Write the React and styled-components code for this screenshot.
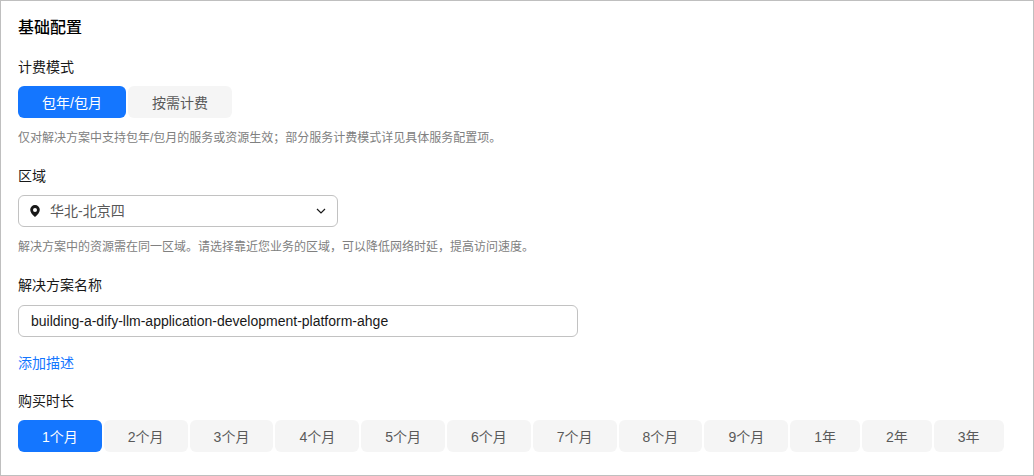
import React, { useState } from 'react';
import styled, { createGlobalStyle } from 'styled-components';

const GlobalStyle = createGlobalStyle`
  * {
    box-sizing: border-box;
  }
  html,
  body,
  #root {
    height: 100%;
  }
  body {
    margin: 0;
    background: #fff;
  }
  body,
  button,
  input,
  select {
    font-family: 'Liberation Sans', 'Noto Sans CJK SC', sans-serif;
    font-size: 14px;
  }
`;

const Panel = styled.main`
  min-height: 100%;
  padding: 15px 17px 23px;
  border: 1px solid #bfbfbf;
  color: #191919;
`;

const Title = styled.h2`
  margin: 0 0 17px;
  color: #000;
  font-size: 16px;
  font-weight: 500;
  line-height: 24px;
`;

const Field = styled.div`
  margin-bottom: ${({ $gap }) => $gap || 19}px;
`;

const Label = styled.label`
  display: block;
  margin-bottom: ${({ $gap }) => $gap || 9}px;
  line-height: 20px;
`;

const Hint = styled.p`
  margin: 11px 0 0;
  color: #808080;
  font-size: 12px;
  line-height: 18px;
`;

const Segments = styled.div`
  display: flex;
  flex-wrap: wrap;
  gap: 2px;
`;

const Segment = styled.button`
  height: 32px;
  padding: 2px 24px 0;
  border: 0;
  border-radius: 6px;
  background: ${({ $active }) => ($active ? '#1476ff' : '#f5f5f5')};
  color: ${({ $active }) => ($active ? '#fff' : '#595959')};
  line-height: 30px;
  white-space: nowrap;
  cursor: pointer;
`;

const SelectWrapper = styled.div`
  position: relative;
  max-width: 320px;
`;

const Select = styled.select`
  display: block;
  width: 100%;
  height: 32px;
  padding: 0 32px 0 31px;
  appearance: none;
  border: 1px solid #c2c2c2;
  border-radius: 6px;
  background: #fff;
  color: #595959;
`;

const PinIcon = styled.svg`
  position: absolute;
  top: 10px;
  left: 12px;
  width: 10px;
  height: 12px;
  pointer-events: none;
`;

const ChevronIcon = styled.svg`
  position: absolute;
  top: 13px;
  right: 12px;
  width: 10px;
  height: 6px;
  pointer-events: none;
`;

const TextInput = styled.input`
  display: block;
  width: 100%;
  max-width: 560px;
  height: 32px;
  padding: 0 12px;
  border: 1px solid #c2c2c2;
  border-radius: 6px;
  background: #fff;
  color: #191919;
`;

const AddLink = styled.a`
  display: inline-block;
  color: #1476ff;
  line-height: 20px;
  text-decoration: none;
`;

const billingModes = ['包年/包月', '按需计费'];

const durations = [
  '1个月',
  '2个月',
  '3个月',
  '4个月',
  '5个月',
  '6个月',
  '7个月',
  '8个月',
  '9个月',
  '1年',
  '2年',
  '3年',
];

function SegmentedControl({ labelId, options }) {
  const [value, setValue] = useState(options[0]);
  return (
    <Segments role="group" aria-labelledby={labelId}>
      {options.map((option) => (
        <Segment
          key={option}
          type="button"
          $active={option === value}
          aria-pressed={option === value}
          onClick={() => setValue(option)}
        >
          {option}
        </Segment>
      ))}
    </Segments>
  );
}

function App() {
  const [name, setName] = useState(
    'building-a-dify-llm-application-development-platform-ahge'
  );
  return (
    <>
      <GlobalStyle />
      <Panel>
        <Title>基础配置</Title>
        <Field>
          <Label as="div" id="billing-label">
            计费模式
          </Label>
          <SegmentedControl labelId="billing-label" options={billingModes} />
          <Hint>
            仅对解决方案中支持包年/包月的服务或资源生效；部分服务计费模式详见具体服务配置项。
          </Hint>
        </Field>
        <Field>
          <Label htmlFor="region">区域</Label>
          <SelectWrapper>
            <Select id="region">
              <option>华北-北京四</option>
            </Select>
            <PinIcon viewBox="0 0 10 12" aria-hidden="true">
              <path
                fill="#191919"
                fillRule="evenodd"
                d="M5 0a4.8 4.8 0 0 1 4.8 4.8c0 2.5-2 4.8-4.8 7.2C2.200 9.600.2 7.300.2 4.800A4.800 4.800 0 0 1 5 0zm0 2.900a2 2 0 1 0 0 4 2 2 0 0 0 0-4z"
              />
            </PinIcon>
            <ChevronIcon viewBox="0 0 10 6" aria-hidden="true">
              <path
                d="M1 1l4 4 4-4"
                fill="none"
                stroke="#191919"
                strokeWidth="1.2"
              />
            </ChevronIcon>
          </SelectWrapper>
          <Hint>
            解决方案中的资源需在同一区域。请选择靠近您业务的区域，可以降低网络时延，提高访问速度。
          </Hint>
        </Field>
        <Field $gap={16}>
          <Label htmlFor="solution-name" $gap={10}>
            解决方案名称
          </Label>
          <TextInput
            id="solution-name"
            type="text"
            value={name}
            onChange={(e) => setName(e.target.value)}
          />
        </Field>
        <Field $gap={18}>
          <AddLink href="#description">添加描述</AddLink>
        </Field>
        <Label as="div" id="duration-label">
          购买时长
        </Label>
        <SegmentedControl labelId="duration-label" options={durations} />
      </Panel>
    </>
  );
}

export default App;
